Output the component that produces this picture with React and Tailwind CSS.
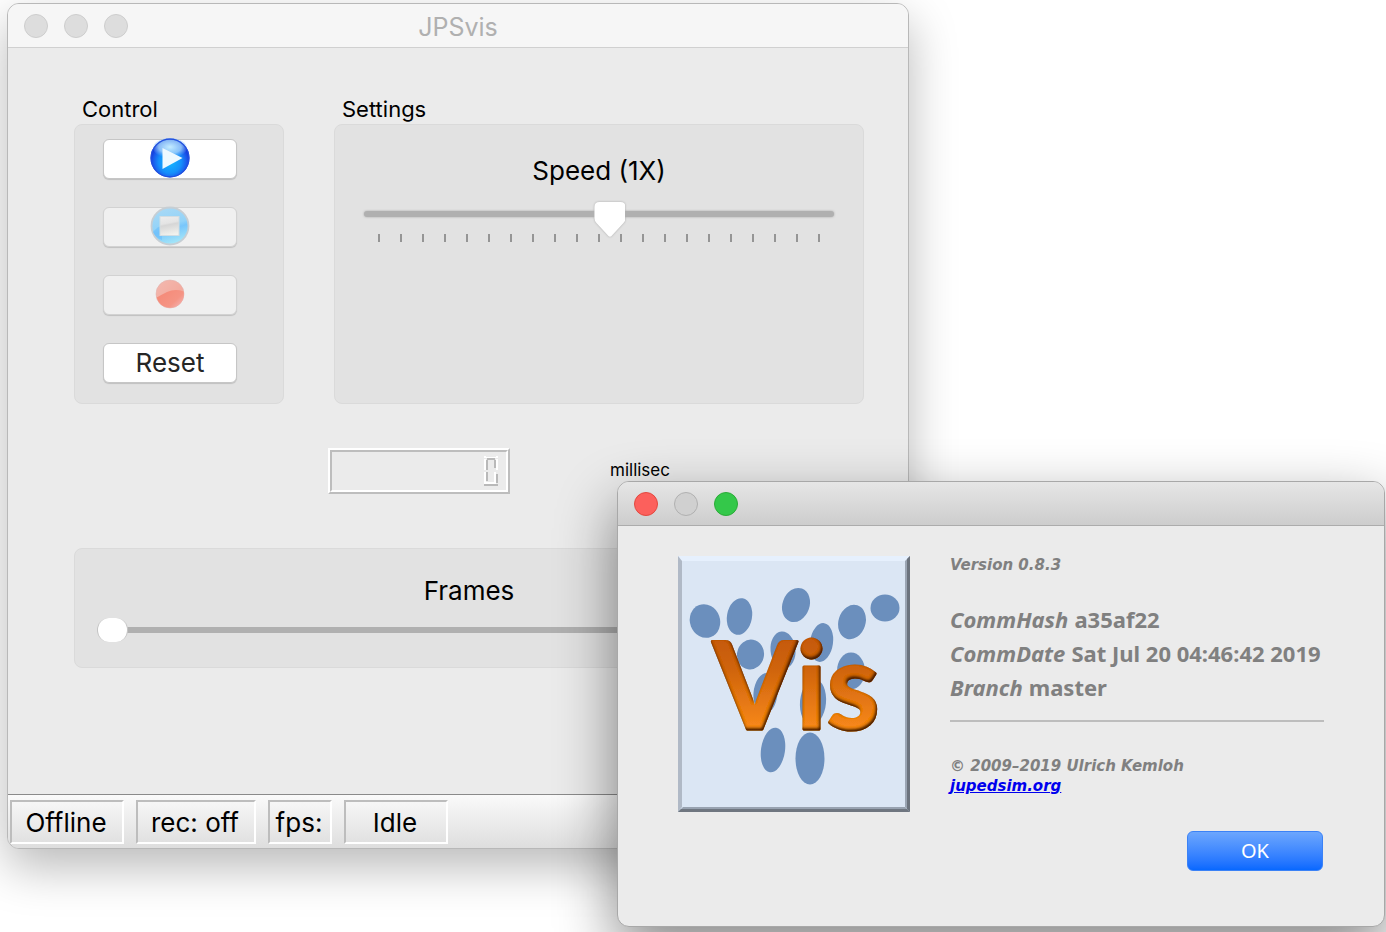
import { useState } from "react";

function TrafficLights({ colors }) {
  return (
    <div className="flex gap-4">
      {colors.map(([name, cls]) => (
        <button key={name} type="button" aria-label={name} className={"size-6 rounded-full border " + cls} />
      ))}
    </div>
  );
}

const inactiveLights = [
  ["Close", "border-[#cdcdcd] bg-[#dddddd]"],
  ["Minimize", "border-[#cdcdcd] bg-[#dddddd]"],
  ["Zoom", "border-[#cdcdcd] bg-[#dddddd]"],
];

const activeLights = [
  ["Close dialog", "border-[#e2483f] bg-[#fc605c]"],
  ["Minimize dialog", "border-[#b0b0b0] bg-[#d0d0d0]"],
  ["Zoom dialog", "border-[#2bab38] bg-[#34c84a]"],
];

function PlayIcon() {
  return (
    <svg viewBox="0 0 40 40" className="size-10" aria-hidden="true">
      <defs>
        <radialGradient id="play-fill" cx="0.5" cy="0.6" r="0.52">
          <stop offset="0" stopColor="#12b8ff" />
          <stop offset="0.55" stopColor="#1590fb" />
          <stop offset="0.85" stopColor="#1a55ea" />
          <stop offset="1" stopColor="#1238d8" />
        </radialGradient>
        <radialGradient id="play-gloss" cx="0.5" cy="0.45" r="0.55">
          <stop offset="0" stopColor="#c4ecff" />
          <stop offset="0.6" stopColor="#9ccffb" stopOpacity="0.85" />
          <stop offset="1" stopColor="#6fb0f8" stopOpacity="0" />
        </radialGradient>
      </defs>
      <circle cx="20" cy="20" r="19.5" fill="url(#play-fill)" />
      <ellipse cx="20" cy="10" rx="17" ry="10" fill="url(#play-gloss)" />
      <circle cx="20" cy="20" r="18.9" fill="none" stroke="#2350de" strokeWidth="1.2" />
      <path d="M12.500 10 L32.500 20 L12.500 31 Z" fill="#eef9ff" />
    </svg>
  );
}

function StopIcon() {
  return (
    <svg viewBox="0 0 40 40" className="size-10" aria-hidden="true">
      <defs>
        <linearGradient id="stop-fill" x1="0.3" y1="0" x2="0.6" y2="1">
          <stop offset="0" stopColor="#a9d9f5" />
          <stop offset="0.48" stopColor="#93d3f8" />
          <stop offset="0.6" stopColor="#78c6fb" />
          <stop offset="1" stopColor="#a8e8f8" />
        </linearGradient>
        <linearGradient id="stop-square" x1="0.3" y1="0" x2="0.5" y2="1">
          <stop offset="0" stopColor="#ececec" />
          <stop offset="0.35" stopColor="#e4e4e4" />
          <stop offset="0.45" stopColor="#d6d6d6" />
          <stop offset="1" stopColor="#f2f2ee" />
        </linearGradient>
      </defs>
      <circle cx="20" cy="20" r="18.500" fill="url(#stop-fill)" stroke="#c6ced4" strokeWidth="1.800" />
      <path d="M3 26 Q8 20 12 20 V34 Q5 31 3 26 Z" fill="#6fc0fb" opacity="0.700" />
      <rect x="10" y="10.500" width="19" height="19" fill="url(#stop-square)" stroke="#d2dde2" />
    </svg>
  );
}

function RecordIcon() {
  return (
    <svg viewBox="0 0 40 40" className="size-10" aria-hidden="true">
      <defs>
        <linearGradient id="rec-fill" x1="0" y1="0" x2="1" y2="1">
          <stop offset="0" stopColor="#f3b9b0" />
          <stop offset="1" stopColor="#f3a294" />
        </linearGradient>
        <linearGradient id="rec-low" x1="0" y1="0.3" x2="1" y2="1">
          <stop offset="0" stopColor="#f58a78" />
          <stop offset="0.6" stopColor="#f59484" />
          <stop offset="1" stopColor="#f3bcc0" />
        </linearGradient>
      </defs>
      <circle cx="20" cy="19" r="14" fill="url(#rec-fill)" stroke="#e2b4ae" strokeWidth="0.600" />
      <path d="M6.800 22.500 Q11 20 17 17 Q25 13.500 33.700 16.500 Q35 26 27 31 Q20 34.500 13 31 Q8 28 6.800 22.500 Z" fill="url(#rec-low)" />
    </svg>
  );
}

function LcdZero() {
  return (
    <svg viewBox="0 0 16 30" className="h-[30px] w-4" role="img" aria-label="0" shapeRendering="crispEdges">
      <g fill="#b9b9b9">
        <rect x="4" y="2" width="8" height="2" />
        <rect x="3" y="4" width="2" height="10" />
        <rect x="11" y="4" width="2" height="8" />
        <rect x="3" y="16" width="2" height="9" />
        <rect x="13" y="18" width="2" height="9" />
        <rect x="1" y="28" width="14" height="2" />
      </g>
      <g fill="#ffffff">
        <rect x="1" y="0" width="2" height="2" />
        <rect x="13" y="0" width="2" height="2" />
        <rect x="3" y="1" width="10" height="1" />
        <rect x="1" y="3" width="2" height="11" />
        <rect x="13" y="3" width="2" height="11" />
        <rect x="1" y="16" width="2" height="11" />
        <rect x="11" y="16" width="2" height="10" />
        <rect x="1" y="26" width="12" height="2" />
      </g>
    </svg>
  );
}

const pedestrians = [
  [35, 76, 15, 17, -20], [69.5, 71.5, 12.5, 18.5, 10], [126, 60, 13.5, 17.5, 20],
  [182, 77, 13.5, 17.5, 18], [215, 63, 14.5, 13.5, 0], [80.5, 109.5, 13.5, 15, 10],
  [113, 105, 12.5, 18.5, -5], [151.5, 97.5, 11.5, 19.5, 8], [181, 126, 14, 18.5, 0],
  [95.5, 148.5, 12, 20.5, 5], [143, 157, 13, 23, 5], [103, 205, 12, 22.5, 8], [140, 213.5, 14.5, 26, 0],
];

function VisLogo() {
  return (
    <svg viewBox="0 0 232 256" className="h-64 w-58 shrink-0" role="img" aria-label="Vis logo">
      <defs>
        <linearGradient id="vis-fill" gradientUnits="userSpaceOnUse" x1="0" y1="86" x2="0" y2="176">
          <stop offset="0" stopColor="#c65a08" />
          <stop offset="0.3" stopColor="#cf640c" />
          <stop offset="1" stopColor="#fa8a1c" />
        </linearGradient>
        <filter id="vis-bevel" x="-10%" y="-10%" width="120%" height="120%">
          <feOffset in="SourceAlpha" dx="-1" dy="-2" result="shift" />
          <feGaussianBlur in="shift" stdDeviation="1.5" result="soft" />
          <feComposite in="SourceAlpha" in2="soft" operator="out" result="edge" />
          <feFlood floodColor="#4a1e00" floodOpacity="1" />
          <feComposite in2="edge" operator="in" result="shade" />
          <feMerge>
            <feMergeNode in="SourceGraphic" />
            <feMergeNode in="shade" />
            <feMergeNode in="shade" />
          </feMerge>
        </filter>
      </defs>
      <rect width="232" height="256" fill="#dbe6f4" />
      <path d="M0 0 H232 L228 5 H4 Z" fill="#e6f0fd" />
      <path d="M0 0 L4 5 V251 L0 256 Z" fill="#b0b9c6" />
      <path d="M232 0 L227 5 V251 L232 256 Z" fill="#9ba5b3" />
      <path d="M232 0 L229 3 V253 L232 256 Z" fill="#6c737d" />
      <path d="M0 256 L5 251 H227 L232 256 Z" fill="#98a2b0" />
      <path d="M0 256 L3 253 H229 L232 256 Z" fill="#6f7680" />
      <g fill="#6b8fbd">
        {pedestrians.map(([x, y, rx, ry, a]) => (
          <ellipse key={x} cx={x - 8} cy={y - 11} rx={rx} ry={ry} transform={`rotate(${a} ${x - 8} ${y - 11})`} />
        ))}
      </g>
      <text
        x="35"
        y="173"
        fontSize="120"
        fill="url(#vis-fill)"
        stroke="url(#vis-fill)"
        strokeWidth="3"
        strokeLinejoin="round"
        filter="url(#vis-bevel)"
        className="font-['Lato'] font-bold"
      >
        Vis
      </text>
    </svg>
  );
}

const pushButton = "flex h-10 w-[134px] items-center justify-center rounded-md border text-[26px] shadow-[0_1px_1px_rgba(0,0,0,0.15)] ";
const panel = "rounded-lg border border-[#dadada] bg-[#e2e2e2] ";
const groupTitle = "mb-[2px] px-2 text-[22px] leading-[26px]";
const track =
  "w-full appearance-none bg-transparent [&::-webkit-slider-runnable-track]:h-[6px] [&::-webkit-slider-runnable-track]:rounded-full [&::-webkit-slider-runnable-track]:bg-[#b0b0b0] [&::-webkit-slider-thumb]:appearance-none [&::-webkit-slider-thumb]:bg-white ";
const statusCell =
  "flex h-11 items-center justify-center border-2 border-t-[#bdbdbd] border-l-[#bdbdbd] border-r-white border-b-white pr-[2px] text-[26px] ";

function MainWindow() {
  const [speed, setSpeed] = useState(10.5);
  const [frame, setFrame] = useState(0);
  return (
    <section
      aria-label="JPSvis"
      className="absolute top-[3px] left-[7px] flex w-[902px] flex-col overflow-hidden rounded-xl border border-[#b8b8b8] bg-[#ebebeb] shadow-[0_18px_48px_rgba(0,0,0,0.28)]"
    >
      <header className="grid h-11 grid-cols-[1fr_auto_1fr] items-center border-b border-[#d0d0d0] bg-[#f6f6f6] px-4">
        <TrafficLights colors={inactiveLights} />
        <h1 className="pt-1 text-[25px] text-[#b0b0b0]">JPSvis</h1>
      </header>

      <main className="flex flex-col pt-12 pr-11 pb-[126px] pl-[66px]">
        <div className="flex gap-[50px]">
          <section className="flex w-[210px] flex-col">
            <h2 className={groupTitle}>Control</h2>
            <div className={panel + "flex h-[280px] flex-col gap-7 px-7 pt-[14px]"}>
              <button type="button" aria-label="Play" className={pushButton + "border-[#c6c6c6] bg-white"}>
                <span className="-my-1 flex pb-[2px]"><PlayIcon /></span>
              </button>
              <button type="button" disabled aria-label="Stop" className={pushButton + "border-[#d2d2d2] bg-[#f0f0f0]"}>
                <span className="-my-1 flex pb-[2px]"><StopIcon /></span>
              </button>
              <button type="button" disabled aria-label="Record" className={pushButton + "border-[#d2d2d2] bg-[#f0f0f0]"}>
                <RecordIcon />
              </button>
              <button type="button" className={pushButton + "border-[#c6c6c6] bg-white pb-[2px] text-[#262626]"}>Reset</button>
            </div>
          </section>

          <section className="flex flex-1 flex-col">
            <h2 className={groupTitle}>Settings</h2>
            <div className={panel + "flex h-[280px] flex-col px-[29px] pt-7"}>
              <label htmlFor="speed" className="text-center text-[26px] leading-9">Speed (1X)</label>
              <input
                id="speed"
                type="range"
                min="0"
                max="20"
                step="0.5"
                value={speed}
                onChange={(e) => setSpeed(Number(e.target.value))}
                className={
                  track +
                  "mt-[7px] h-9 drop-shadow-[0_0_1px_rgba(0,0,0,0.25)] [&::-webkit-slider-thumb]:-mt-[9px] [&::-webkit-slider-thumb]:h-9 [&::-webkit-slider-thumb]:w-[31px] [&::-webkit-slider-thumb]:[clip-path:path('M5_0H26Q31_0_31_5V16Q31_19_29_21L17_34Q15.5_35.5_14_34L2_21Q0_19_0_16V5Q0_0_5_0Z')]"
                }
              />
              <div className="mt-[2px] flex justify-between px-[14px]" aria-hidden="true">
                {Array.from({ length: 21 }, (_, i) => (
                  <i key={i} className="h-2 w-[2px] bg-[#959595]" />
                ))}
              </div>
            </div>
          </section>
        </div>

        <div className="mt-11 flex items-start gap-[100px] pl-[254px]">
          <div className="border-2 border-t-white border-r-[#bdbdbd] border-b-[#bdbdbd] border-l-white">
            <div className="flex h-[42px] w-[178px] items-center justify-end border-2 border-t-[#bdbdbd] border-r-white border-b-white border-l-[#bdbdbd] pr-[7px]">
              <LcdZero />
            </div>
          </div>
          <span className="text-[17px] leading-[44px]">millisec</span>
        </div>

        <div className={panel + "mt-[54px] flex h-[120px] flex-col px-[22px] pt-6"}>
          <label htmlFor="frames" className="text-center text-[26px] leading-9">Frames</label>
          <input
            id="frames"
            type="range"
            min="0"
            max="100"
            value={frame}
            onChange={(e) => setFrame(Number(e.target.value))}
            className={
              track +
              "mt-[9px] h-6 [&::-webkit-slider-thumb]:-mt-[9px] [&::-webkit-slider-thumb]:h-6 [&::-webkit-slider-thumb]:w-[31px] [&::-webkit-slider-thumb]:rounded-[12px] [&::-webkit-slider-thumb]:border-x [&::-webkit-slider-thumb]:border-[#c4c4c4]"
            }
          />
        </div>
      </main>

      <footer className="flex h-[54px] gap-3 border-t border-[#8a8a8a] bg-linear-to-b from-[#fafafa] to-[#dedede] px-[2px] pt-[5px]">
        <span className={statusCell + "w-[114px]"}>Offline</span>
        <span className={statusCell + "w-[120px]"}>rec: off</span>
        <span className={statusCell + "w-16"}>fps:</span>
        <span className={statusCell + "w-[104px]"}>Idle</span>
      </footer>
    </section>
  );
}

function AboutDialog() {
  return (
    <section
      role="dialog"
      aria-label="About"
      className="absolute top-[481px] left-[617px] flex w-[768px] flex-col overflow-hidden rounded-xl border border-[#a8a8a8] bg-[#ebebeb] shadow-[0_24px_60px_rgba(0,0,0,0.48)]"
    >
      <header className="flex h-11 items-center border-b border-[#acacac] bg-linear-to-b from-[#e6e6e6] to-[#cdcdcd] px-4">
        <TrafficLights colors={activeLights} />
      </header>
      <div className="flex gap-10 px-[60px] pt-[30px] pb-[55px]">
        <VisLogo />
        <div className="flex flex-1 flex-col font-['Noto_Sans',sans-serif] font-bold text-[#808080]">
          <p className="font-['DejaVu_Sans',sans-serif] text-[15px] leading-[18px] italic">Version 0.8.3</p>
          <dl className="mt-7 border-b-2 border-[#bdbdbd] pb-4 text-[22px] leading-[34px] whitespace-nowrap">
            <div className="flex gap-[6px]"><dt className="italic">CommHash</dt><dd>a35af22</dd></div>
            <div className="flex gap-[6px]"><dt className="italic">CommDate</dt><dd>Sat Jul 20 04:46:42 2019</dd></div>
            <div className="flex gap-[6px]"><dt className="italic">Branch</dt><dd>master</dd></div>
          </dl>
          <p className="mt-[34px] font-['DejaVu_Sans',sans-serif] text-[15px] leading-5 italic">
            © 2009–2019 Ulrich Kemloh
            <br />
            <a href="https://jupedsim.org" className="text-[#0000ee] underline">jupedsim.org</a>
          </p>
          <button
            type="button"
            className="mt-[35px] mr-px h-10 w-[136px] self-end rounded-md border border-[#3b82f6] bg-linear-to-b from-[#6ca6fd] to-[#0668ff] text-xl font-normal text-white"
          >
            OK
          </button>
        </div>
      </div>
    </section>
  );
}

export default function App() {
  return (
    <div className="relative min-h-screen overflow-hidden bg-white font-['Inter',sans-serif] text-black">
      <MainWindow />
      <AboutDialog />
    </div>
  );
}
